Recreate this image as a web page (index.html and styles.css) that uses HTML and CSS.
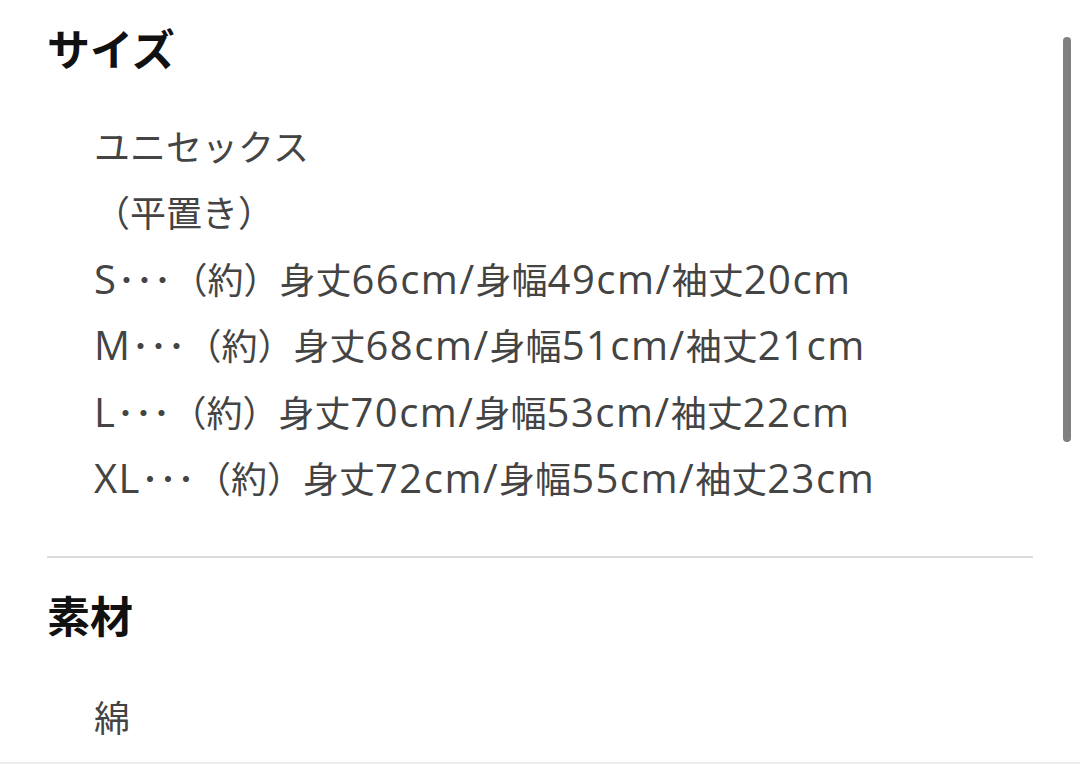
FILE: index.html
```html
<!DOCTYPE html>
<html lang="ja">
<head>
    <meta charset="UTF-8">
    <meta name="viewport" content="width=device-width, initial-scale=1.0">
    <title>サイズ・素材</title>
    <link rel="stylesheet" href="styles.css">
</head>
<body>

<div class="page">
    <div class="section section-size">
        <h2 class="section-title">サイズ</h2>
        <div class="section-body">
            <div class="line">ユニセックス</div>
            <div class="line">（平置き）</div>
            <div class="line"><span class="en">S</span>･･･（約）身丈<span class="en">66cm/</span>身幅<span class="en">49cm/</span>袖丈<span class="en">20cm</span></div>
            <div class="line"><span class="en">M</span>･･･（約）身丈<span class="en">68cm/</span>身幅<span class="en">51cm/</span>袖丈<span class="en">21cm</span></div>
            <div class="line"><span class="en">L</span>･･･（約）身丈<span class="en">70cm/</span>身幅<span class="en">53cm/</span>袖丈<span class="en">22cm</span></div>
            <div class="line"><span class="en">XL</span>･･･（約）身丈<span class="en">72cm/</span>身幅<span class="en">55cm/</span>袖丈<span class="en">23cm</span></div>
        </div>
    </div>
    <div class="section section-material">
        <h2 class="section-title">素材</h2>
        <div class="section-body">
            <div class="line">綿</div>
        </div>
    </div>
    <div class="bottom-rule"></div>
</div>

<div class="scrollbar"></div>

</body>
</html>
```

FILE: styles.css
```css
        body {
            margin: 0;
            padding: 0;
            background-color: #ffffff;
            font-family: "Noto Sans CJK JP", "Noto Sans", sans-serif;
            overflow: hidden;
        }

        .page {
            height: 765px;
            display: flex;
            flex-direction: column;
        }

        .section {
            margin: 0 47px;
        }

        .section-size {
            padding-top: 18px;
            padding-bottom: 46px;
            border-bottom: 2px solid #dcdcdc;
        }

        .section-material {
            padding-top: 27px;
            flex: 1;
        }

        .section-title {
            margin: 0;
            font-size: 43px;
            line-height: 58px;
            font-weight: 700;
            color: #111111;
        }

        .section-body {
            padding-left: 47px;
            margin-top: 36px;
            color: #444444;
            font-size: 36px;
            line-height: 66.4px;
        }

        /* latin runs are set a bit larger, like the original font */
        .section-body .en {
            font-family: "Open Sans", "Noto Sans", sans-serif;
            font-size: 40px;
            line-height: 1;
            letter-spacing: 1.5px;
        }

        .section-material .section-body {
            margin-top: 40px;
        }

        .bottom-rule {
            height: 2px;
            background-color: #ececec;
            margin-bottom: 1px;
        }

        /* overlay scrollbar */
        .scrollbar {
            position: absolute;
            top: 37px;
            left: 1063px;
            width: 8px;
            height: 405px;
            border-radius: 4px;
            background-color: #808080;
        }
```
